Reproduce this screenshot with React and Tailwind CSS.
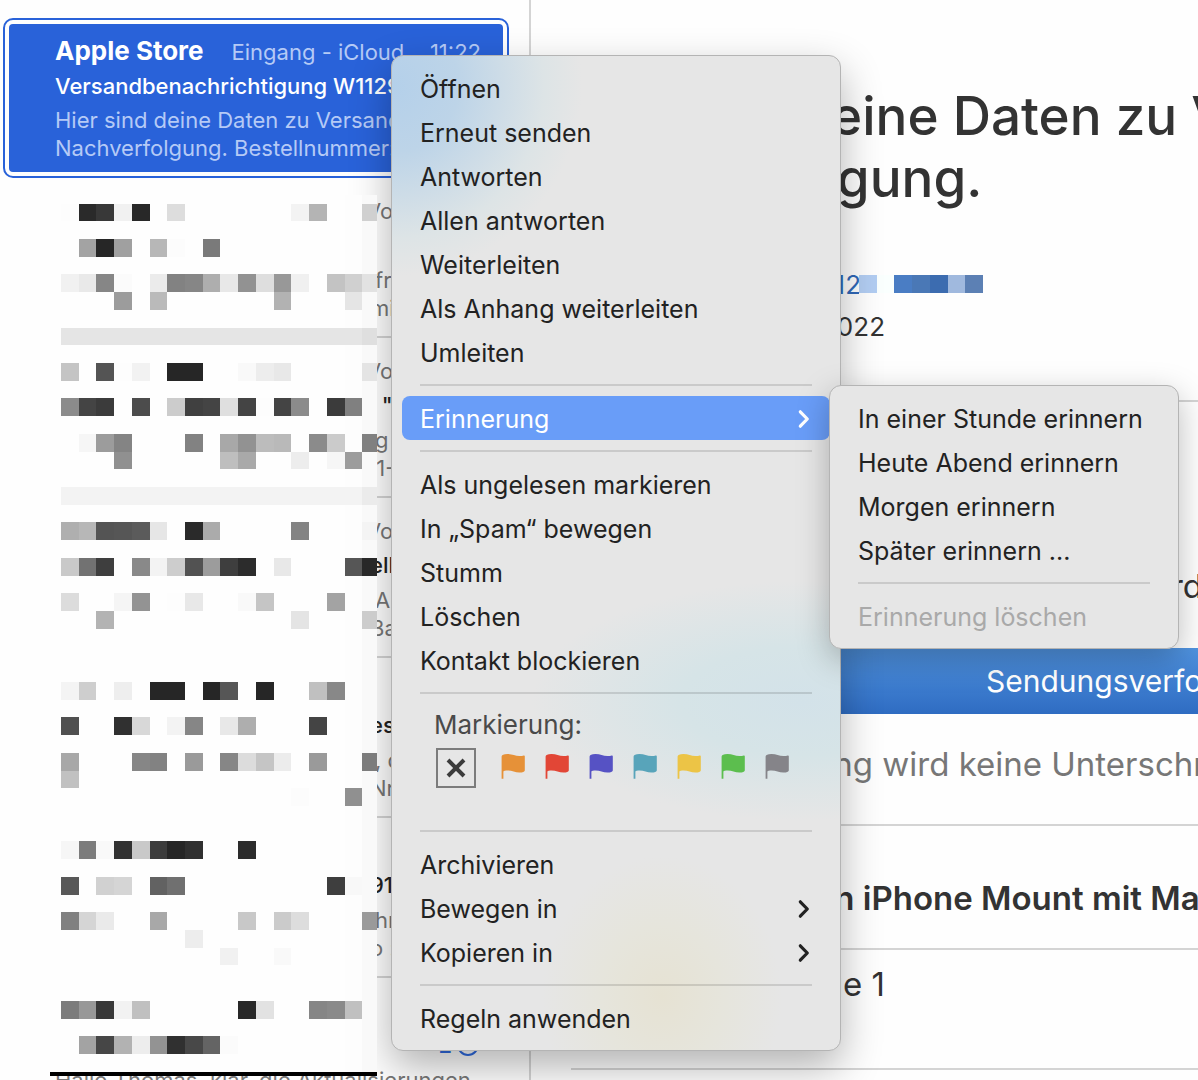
import React from 'react';

const messages = [
    { sender: 'Von', subject: '', preview: ['fragen', 'mit'] },
    { sender: 'Von', subject: '  "', preview: ['g', ' 1-2'] },
    { sender: 'Von', subject: 'ell', preview: ['An', 'Bahn'] },
    { sender: '', subject: 'es', preview: [', da', 'Nr. 1'] },
    { sender: '', subject: '91', preview: ['hr', 'o :'] },
];

const menuGroups = [
    ['Öffnen', 'Erneut senden', 'Antworten', 'Allen antworten', 'Weiterleiten', 'Als Anhang weiterleiten', 'Umleiten'],
    ['Als ungelesen markieren', 'In „Spam“ bewegen', 'Stumm', 'Löschen', 'Kontakt blockieren'],
];

const flags = [
    { name: 'Orange', color: '#e69138' },
    { name: 'Rot', color: '#e24636' },
    { name: 'Violett', color: '#5652c4' },
    { name: 'Blau', color: '#58a4ba' },
    { name: 'Gelb', color: '#ecc446' },
    { name: 'Grün', color: '#5cbe4e' },
    { name: 'Grau', color: '#858489' },
];

// Redacted area: row index -> grey level per column
const CELL = 17.72;
const mosaicRows = {
    0: { 0: 'fd', 1: '2a', 2: '38', 3: 'f1', 4: '28', 6: 'dd', 13: 'f3', 14: 'b4', 17: 'd0' },
    2: { 1: 'a3', 2: '26', 3: 'a0', 5: 'b7', 6: 'fc', 8: '7a' },
    4: { 0: 'f1', 1: 'e9', 2: '86', 3: 'fb', 5: 'eb', 6: '82', 7: '86', 8: 'ae', 9: 'e8', 10: '92', 11: 'de', 12: '98', 13: 'f0', 15: 'c3', 16: 'd0', 17: 'e2' },
    5: { 3: '9c', 5: 'ba', 12: 'b2', 16: 'e5' },
    9: { 0: 'c4', 2: '54', 3: 'fd', 4: 'f2', 6: '26', 7: '26', 10: 'f9', 11: 'ed', 12: 'e8', 17: 'e4' },
    11: { 0: '8b', 1: '44', 2: '3b', 4: '4c', 6: 'cc', 7: '40', 8: '44', 9: 'df', 10: '44', 11: 'fd', 12: '44', 13: '8b', 15: '3b', 16: '80' },
    13: { 1: 'f6', 2: '9c', 3: '84', 7: '82', 9: 'a8', 10: '92', 11: 'bc', 12: 'b9', 14: '8b', 15: 'cb', 17: '80' },
    14: { 3: '90', 9: 'be', 10: 'a9', 13: 'ed', 15: 'f6', 16: '9c' },
    18: { 0: 'af', 1: 'b7', 2: '54', 3: '56', 4: '5b', 5: 'e6', 7: '2a', 8: 'ab', 13: '83', 17: 'f4' },
    20: { 0: 'c9', 1: '72', 2: '3e', 4: '89', 5: 'f3', 6: 'cd', 7: '52', 8: '9c', 9: '3e', 10: '2c', 12: 'e8', 16: '56', 17: '28' },
    22: { 0: 'dc', 3: 'f5', 4: '93', 6: 'fd', 7: 'e8', 10: 'f9', 11: 'c5', 15: 'a3' },
    23: { 2: 'b3', 13: 'e4', 17: 'cc' },
    27: { 0: 'f4', 1: 'ce', 3: 'ee', 5: '26', 6: '26', 8: '26', 9: '56', 11: '26', 14: 'c0', 15: '88' },
    29: { 0: '50', 3: '30', 4: 'd8', 6: 'f3', 7: '86', 9: 'e8', 10: 'ae', 14: '44' },
    31: { 0: 'a8', 4: '86', 5: '82', 7: '9a', 9: '86', 10: 'dc', 11: 'c5', 12: 'ec', 14: '9a', 17: '7c' },
    32: { 0: 'c1' },
    33: { 13: 'fc', 16: '90' },
    36: { 0: 'f6', 1: '7c', 2: 'f9', 3: '32', 4: 'c9', 5: '3c', 6: '26', 7: '30', 10: '2c' },
    38: { 0: '58', 2: 'd1', 3: 'd5', 5: '62', 6: '70', 15: '3e', 16: 'f8' },
    40: { 0: '80', 1: 'd5', 2: 'ea', 5: 'a8', 10: 'c8', 12: 'cb', 13: 'dd', 17: '9a' },
    41: { 7: 'ed' },
    42: { 9: 'f1', 12: 'f9' },
    45: { 0: '7c', 1: '98', 2: '38', 3: 'f2', 4: 'c0', 10: '28', 11: 'e2', 14: '86', 15: '8a', 16: 'c0' },
    47: { 1: 'a3', 2: '46', 3: 'b2', 4: 'ed', 5: '93', 6: '30', 7: '48', 8: '64', 9: 'fb' },
};

const edge = (i) => Math.round(i * CELL);
const rowEdge = (i) => Math.floor(i * CELL);

function Mosaic() {
    return (
        <svg width="327" height="890" viewBox="-11 -18 327 890" shapeRendering="crispEdges" aria-hidden="true" className="absolute left-[50px] top-[186px] z-30">
            <rect x="0" y="-9" width="316" height="877" fill="#fefefe" />
            <rect x={edge(16)} y="-9" width="32" height="877" fill="#fdfdfd" />
            <rect x={edge(17)} y="-9" width="15" height="877" fill="#f9f9f9" />
            <rect x="0" y={rowEdge(7)} width="316" height="17" fill="#e5e5e5" />
            <rect x={edge(17)} y={rowEdge(7)} width="15" height="17" fill="#dfdfdf" />
            <rect x="0" y={rowEdge(16)} width="316" height="18" fill="#f3f3f3" />
            <rect x={edge(17)} y={rowEdge(16)} width="15" height="18" fill="#ebebeb" />
            {Object.entries(mosaicRows).map(([row, cells]) =>
                Object.entries(cells).map(([col, grey]) => (
                    <rect
                        key={`${row}-${col}`}
                        x={edge(Number(col))}
                        y={rowEdge(Number(row))}
                        width={Math.min(edge(Number(col) + 1), 316) - edge(Number(col))}
                        height={rowEdge(Number(row) + 1) - rowEdge(Number(row))}
                        fill={`#${grey}${grey}${grey}`}
                    />
                ))
            )}
            <rect x="-11" y="868" width="327" height="4" fill="#000" />
        </svg>
    );
}

function OrderNumberMosaic() {
    const colors = ['#b2cdf2', '#fafffe', '#4a7dc4', '#4a78b6', '#3c6cb0', '#a0b9de', '#5c80b4'];
    return (
        <svg width="124" height="38" viewBox="0 0 124 38" shapeRendering="crispEdges" aria-hidden="true" className="-ml-0.5 shrink-0 bg-[#fefefe]">
            {colors.map((color, i) => (
                <rect key={color} x={edge(i)} y="9" width={edge(i + 1) - edge(i)} height="18" fill={color} />
            ))}
        </svg>
    );
}

function Chevron() {
    return (
        <svg width="12" height="22" viewBox="0 0 12 22" fill="none" stroke="currentColor" strokeWidth="3.2" strokeLinecap="round" strokeLinejoin="round" aria-hidden="true">
            <path d="M2.3 4.8 9.3 12l-7 7.2" />
        </svg>
    );
}

function Flag({ color }) {
    return (
        <svg width="24" height="30" viewBox="0 0 24 30" fill={color} aria-hidden="true">
            <path d="M.6 25.7V3.4C.6 1.9 2.8 1 6.4 1c5 0 7.6 2.1 12 2.1 2 0 3.3-.3 4.3-.6.7-.2 1.1.1 1.1.8v14.2c0 1-2.2 2.1-5.3 2.1-4.6 0-7.4-2-11.9-2-2.4 0-3.6.4-4.2.9v7.2z" />
        </svg>
    );
}

function MenuItem({ children, active, disabled, submenu }) {
    return (
        <button
            type="button"
            role="menuitem"
            disabled={disabled}
            className={`flex h-11 w-full items-center justify-between rounded-lg pl-[18px] pr-5 text-left text-[25px] whitespace-nowrap ${
                active ? 'bg-[#699df8] text-white' : disabled ? 'text-[#a9a9a9]' : 'text-[#222]'
            }`}
        >
            <span className="pt-[3px]">{children}</span>
            {submenu && <Chevron />}
        </button>
    );
}

function Separator() {
    return <div role="separator" className="mx-[18px] my-[10px] h-0.5 bg-black/12" />;
}

function ContextMenu() {
    return (
        <div
            role="menu"
            className="absolute left-[391px] top-[55px] z-10 w-[450px] rounded-xl border border-[#b4b4b4] bg-[#e6e6e6] bg-[radial-gradient(ellipse_190px_190px_at_0px_30px,#b4d0ea_0%,#bdd4e8_35%,#dde4e6_80%,transparent_100%),radial-gradient(ellipse_270px_120px_at_410px_645px,#d3e2e9_0%,#d6e4e7_45%,transparent_100%),radial-gradient(ellipse_120px_140px_at_270px_940px,#e6e2d3_0%,#e6e5dc_50%,transparent_100%)] p-[10px] shadow-[0_16px_40px_rgba(0,0,0,0.3)]"
        >
            {menuGroups[0].map((item) => <MenuItem key={item}>{item}</MenuItem>)}
            <Separator />
            <MenuItem active submenu>Erinnerung</MenuItem>
            <Separator />
            {menuGroups[1].map((item) => <MenuItem key={item}>{item}</MenuItem>)}
            <Separator />
            <div className="h-[116px] pl-8">
                <p className="h-11 text-[26px] leading-[42px] text-[#4a4a4a]">Markierung:</p>
                <div className="ml-0.5 flex items-center">
                    <button type="button" aria-label="Keine Markierung" className="mr-[15px] flex size-10 items-center justify-center border-2 border-[#7c7c7c]">
                        <svg width="20" height="20" viewBox="0 0 20 20" stroke="#3c3c3c" strokeWidth="4" aria-hidden="true">
                            <path d="m2 2 16 16M18 2 2 18" />
                        </svg>
                    </button>
                    {flags.map((flag) => (
                        <button key={flag.name} type="button" aria-label={flag.name} className="flex w-11 justify-center">
                            <Flag color={flag.color} />
                        </button>
                    ))}
                </div>
            </div>
            <Separator />
            <MenuItem>Archivieren</MenuItem>
            <MenuItem submenu>Bewegen in</MenuItem>
            <MenuItem submenu>Kopieren in</MenuItem>
            <Separator />
            <MenuItem>Regeln anwenden</MenuItem>
        </div>
    );
}

function ReminderMenu() {
    return (
        <div role="menu" className="absolute left-[829px] top-[385px] z-20 w-[350px] rounded-xl border border-[#b4b4b4] bg-[#e6e6e6] p-[10px] shadow-[0_10px_32px_rgba(0,0,0,0.26)]">
            <MenuItem>In einer Stunde erinnern</MenuItem>
            <MenuItem>Heute Abend erinnern</MenuItem>
            <MenuItem>Morgen erinnern</MenuItem>
            <MenuItem>Später erinnern ...</MenuItem>
            <Separator />
            <MenuItem disabled>Erinnerung löschen</MenuItem>
        </div>
    );
}

function MessageList() {
    return (
        <section className="w-[531px] shrink-0 overflow-hidden border-r-2 border-[#d4d4d4] pt-[18px] text-[22px] leading-7 whitespace-nowrap">
            <article className="ml-[3px] mr-5 h-40 rounded-[10px] border-2 border-[#2962d9] p-1">
                <div className="h-full overflow-hidden rounded-[4px] bg-[#2962d9] pl-[46px] pr-[22px] pt-[11px] text-[#b5caf6]">
                    <div className="flex items-baseline">
                        <h2 className="text-[26px] leading-8 font-bold text-white">Apple Store</h2>
                        <span className="ml-7">Eingang - iCloud</span>
                        <time className="ml-auto">11:22</time>
                    </div>
                    <p className="mt-[5px] font-medium text-white">Versandbenachrichtigung W1129</p>
                    <p className="mt-[6px]">Hier sind deine Daten zu Versand und</p>
                    <p>Nachverfolgung. Bestellnummer:</p>
                </div>
            </article>
            {messages.map((message, i) => (
                <article key={i} className="ml-[61px] mr-5 h-40 border-b-2 border-[#d4d4d4] pt-[19px] whitespace-pre text-[#777]">
                    <p className="h-7 pl-[305px]">{message.sender}</p>
                    <p className="mt-[6px] h-7 pl-[309px] font-medium text-[#222]">{message.subject}</p>
                    <p className="mt-[7px] pl-[314px]">{message.preview[0]}</p>
                    <p className="pl-[309px]">{message.preview[1]}</p>
                </article>
            ))}
            <article className="ml-[55px] mr-[49px] pt-[53px] text-[#777]">
                <p className="flex items-center justify-end gap-1 font-medium text-[#2f6be0]">
                    2
                    <svg width="24" height="24" viewBox="0 0 24 24" fill="none" stroke="currentColor" strokeWidth="2" aria-hidden="true">
                        <circle cx="12" cy="12" r="10" />
                        <path d="m10 7 5 5-5 5" />
                    </svg>
                </p>
                <p className="mt-[7px]">Hallo Thomas, klar, die Aktualisierungen</p>
            </article>
        </section>
    );
}

function Message() {
    return (
        <main className="min-w-0 flex-1 overflow-hidden pl-10 pt-[85px] text-[33px] leading-[48px] whitespace-nowrap text-[#333]">
            <h1 className="-ml-3 text-[53px] leading-[62px] font-medium">
                Hier sind deine Daten zu Versand
                <br />
                Nachverfolgung.
            </h1>
            <div className="mt-[55px] flex h-[42px] items-center text-[26px] leading-[42px]">
                <a href="#bestellung" className="w-[290px] text-right text-[#2f68b8]">Bestellnummer: W112</a>
                <OrderNumberMosaic />
            </div>
            <p className="w-[314px] text-right text-[26px] leading-[42px]">Datum: 30. Juni 2022</p>
            <hr className="mt-[52px] border-t-2 border-[#d4d4d4]" />
            <p className="mt-[160px] pl-[565px]">wird</p>
            <button type="button" className="mt-[38px] block h-[66px] w-full overflow-hidden bg-linear-to-b from-[#5093e0] to-[#2f6cc2] pl-[415px] text-left text-[30px] text-white">
                Sendungsverfolgung
            </button>
            <p className="mt-[26px] pl-[154px] text-[#777]">Lieferung wird keine Unterschrift benötigt</p>
            <hr className="mt-9 border-t-2 border-[#d4d4d4]" />
            <p className="mt-12 pl-[186px] font-semibold">Belkin iPhone Mount mit MagSafe</p>
            <hr className="mt-[26px] border-t-2 border-[#d4d4d4]" />
            <p className="mt-[10px] w-[314px] text-right">Menge 1</p>
            <hr className="mt-[60px] border-t-2 border-[#d4d4d4]" />
        </main>
    );
}

export default function App() {
    return (
        <div className="relative flex h-screen overflow-hidden bg-[#fefefe] font-[Inter,'Liberation_Sans',sans-serif]">
            <MessageList />
            <Message />
            <Mosaic />
            <ContextMenu />
            <ReminderMenu />
        </div>
    );
}
